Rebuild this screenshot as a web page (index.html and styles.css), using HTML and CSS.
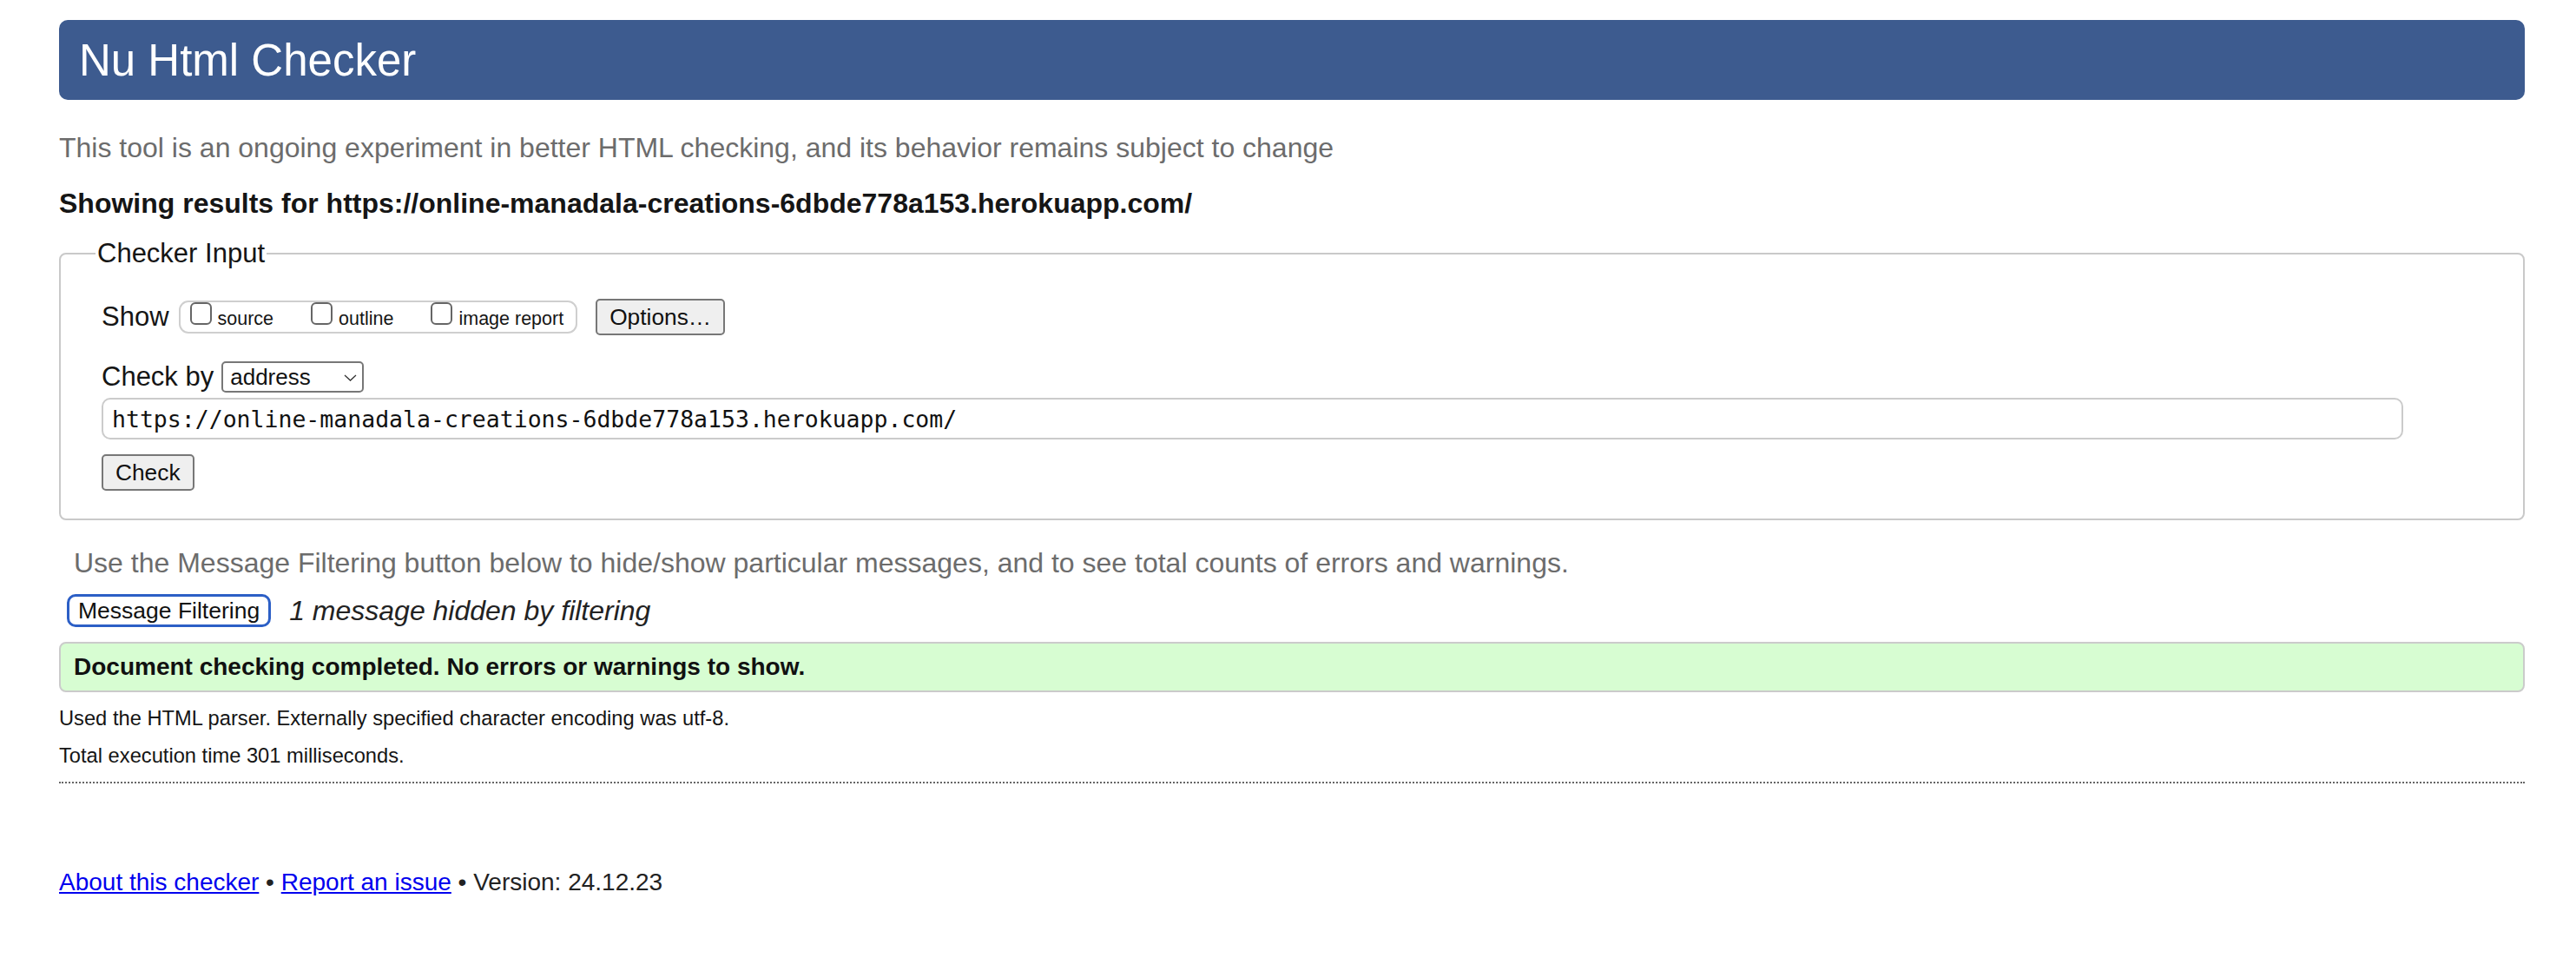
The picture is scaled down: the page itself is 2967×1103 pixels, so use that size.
FILE: index.html
```html
<!DOCTYPE html>
<html lang="en">
<head>
<meta charset="utf-8">
<title>Nu Html Checker</title>
<link rel="stylesheet" href="styles.css">
</head>
<body>
<div class="page">
  <h1 class="title">Nu Html Checker</h1>
  <p class="intro">This tool is an ongoing experiment in better HTML checking, and its behavior remains subject to change</p>
  <p class="showing">Showing results for https://online-manadala-creations-6dbde778a153.herokuapp.com/</p>
  <fieldset class="checker">
    <legend class="legend">Checker Input</legend>
    <div class="row">
      <span class="lbl">Show</span>
      <span class="opts">
        <label class="opt"><input type="checkbox" class="cb"><span>source</span></label>
        <label class="opt"><input type="checkbox" class="cb"><span>outline</span></label>
        <label class="opt"><input type="checkbox" class="cb"><span>image report</span></label>
      </span>
      <button class="btn options-btn" type="button">Options…</button>
    </div>
    <div class="row row-check">
      <span class="lbl">Check by</span>
      <span class="select-wrap">
        <select class="sel"><option>address</option></select>
        <svg class="chev" viewBox="0 0 15 8" width="15" height="8"><path d="M1 1 L7.5 7 L14 1" fill="none" stroke="#333" stroke-width="1.3"/></svg>
      </span>
    </div>
    <input class="url" type="text" value="https://online-manadala-creations-6dbde778a153.herokuapp.com/">
    <div class="row-btn"><button class="btn check-btn" type="button">Check</button></div>
  </fieldset>
  <p class="filter-note">Use the Message Filtering button below to hide/show particular messages, and to see total counts of errors and warnings.</p>
  <div class="filter-row">
    <button class="filter-btn" type="button">Message Filtering</button>
    <em class="hidden-note">1 message hidden by filtering</em>
  </div>
  <div class="success">Document checking completed. No errors or warnings to show.</div>
  <p class="small first">Used the HTML parser. Externally specified character encoding was utf-8.</p>
  <p class="small second">Total execution time 301 milliseconds.</p>
  <hr class="dots">
  <p class="footer"><a href="#">About this checker</a> • <a href="#">Report an issue</a> • Version: 24.12.23</p>
</div>
</body>
</html>
```

FILE: styles.css
```css
html, body {
  margin: 0;
  padding: 0;
  background: #fff;
}
body {
  font-family: "Liberation Sans", Arial, Helvetica, sans-serif;
  color: #222;
}
.page {
  width: 2840px;
  margin-left: 68px;
  padding-top: 23px;
}
.title {
  margin: 0;
  height: 92px;
  box-sizing: border-box;
  padding: 0 0 0 23px;
  display: flex;
  align-items: center;
  background: #3d5b8f;
  color: #fff;
  font-size: 51px;
  font-weight: normal;
  border-radius: 10px;
}
.intro {
  margin: 36px 0 0 0;
  font-size: 32px;
  color: #6c6c6c;
  line-height: 38px;
}
.showing {
  margin: 26px 0 0 0;
  font-size: 32px;
  font-weight: bold;
  color: #151515;
  line-height: 38px;
}
.checker {
  margin: 21px 0 0 0;
  padding: 34px 44px 32px 47px;
  border: 2px solid #c9c9c9;
  border-radius: 8px;
  min-width: 0;
}
.legend {
  font-size: 31px;
  line-height: 36px;
  padding: 0 2px;
  margin-left: -7px;
  color: #151515;
}
.row {
  display: flex;
  align-items: center;
  gap: 10px;
}
.lbl {
  font-size: 31px;
  line-height: 36px;
  color: #151515;
}
.opts {
  display: inline-flex;
  align-items: flex-start;
  gap: 43px;
  height: 38px;
  box-sizing: border-box;
  border: 2px solid #cfcfcf;
  border-radius: 11px;
  padding: 0 14px 0 11px;
  margin-left: 1px;
}
.opt {
  display: inline-flex;
  align-items: baseline;
  gap: 7px;
  font-size: 21.5px;
  color: #151515;
}
.cb {
  appearance: none;
  -webkit-appearance: none;
  margin: 0;
  width: 25px;
  height: 26px;
  box-sizing: border-box;
  border: 2px solid #666;
  border-radius: 6px;
  background: #fff;
}
.btn {
  font-family: "Liberation Sans", Arial, sans-serif;
  font-size: 26.3px;
  color: #111;
  background: #efefef;
  border: 2px solid #777;
  border-radius: 5px;
  height: 42px;
  box-sizing: border-box;
  padding: 0 14px;
}
.options-btn {
  margin-left: 11px;
}
.row-check {
  margin-top: 30px;
  gap: 9px;
}
.select-wrap {
  position: relative;
  display: inline-flex;
}
.sel {
  appearance: none;
  -webkit-appearance: none;
  font-family: "Liberation Sans", Arial, sans-serif;
  font-size: 26px;
  color: #111;
  background: #fff;
  border: 2px solid #777;
  border-radius: 5px;
  height: 36px;
  width: 164px;
  box-sizing: border-box;
  padding: 0 0 0 8px;
}
.chev {
  position: absolute;
  right: 8px;
  top: 15px;
  pointer-events: none;
}
.url {
  display: block;
  box-sizing: border-box;
  margin-top: 6px;
  width: 2651px;
  height: 48px;
  border: 2px solid #cbcbcb;
  border-radius: 10px;
  padding: 0 10px;
  font-family: "DejaVu Sans Mono", "Liberation Mono", monospace;
  font-size: 26.5px;
  color: #111;
  background: #fff;
}
.row-btn {
  margin-top: 17px;
  display: flex;
}
.filter-note {
  margin: 30px 0 0 17px;
  font-size: 32px;
  color: #6c6c6c;
  line-height: 38px;
}
.filter-row {
  display: flex;
  align-items: center;
  gap: 21px;
  margin-top: 17px;
  margin-left: 9px;
  height: 38px;
}
.filter-btn {
  font-family: "Liberation Sans", Arial, sans-serif;
  font-size: 26.5px;
  color: #111;
  background: #fff;
  border: 3px solid #2c5fc6;
  border-radius: 10px;
  height: 38px;
  box-sizing: border-box;
  padding: 0 10px;
}
.hidden-note {
  font-size: 32px;
  color: #222;
}
.success {
  margin-top: 17px;
  height: 58px;
  box-sizing: border-box;
  display: flex;
  align-items: center;
  padding-left: 15px;
  background: #d7fdd2;
  border: 2px solid #cbcbcb;
  border-radius: 8px;
  font-size: 28px;
  font-weight: bold;
  color: #111;
}
.small {
  margin: 0;
  font-size: 23.7px;
  color: #151515;
  line-height: 31px;
}
.first {
  margin-top: 15px;
}
.second {
  margin-top: 12px;
}
.dots {
  margin: 14px 0 0 0;
  border: 0;
  border-top: 2px dotted #666;
  height: 0;
}
.footer {
  margin: 98px 0 0 0;
  font-size: 28px;
  line-height: 32px;
  color: #222;
}
.footer a {
  color: #0000ee;
}
```
